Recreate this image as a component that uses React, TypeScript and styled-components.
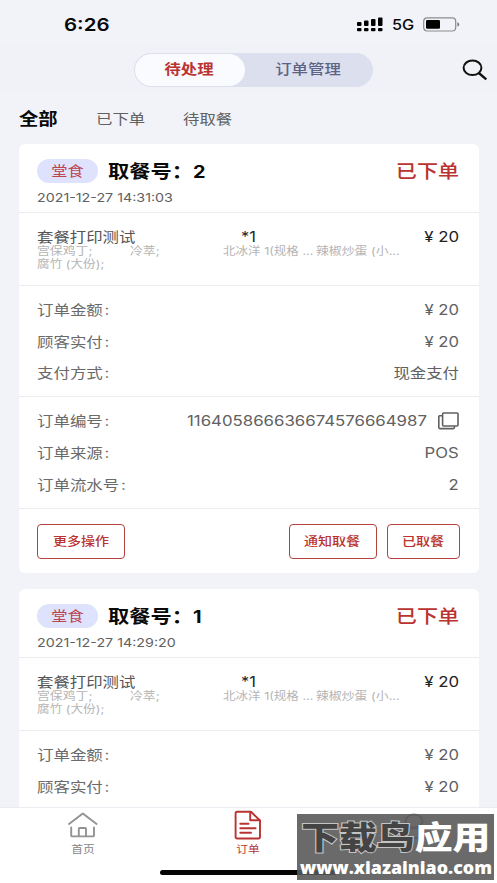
import React from "react";
import styled, { createGlobalStyle } from "styled-components";

const GlobalStyle = createGlobalStyle`
  * { box-sizing: border-box; }
  body { margin: 0; background: #f2f3f8; }
`;

type Align = "left" | "center" | "right";

const Txt = styled.span<{ $size: number; $x?: number; $color?: string; $weight?: number; $align?: Align; $dy?: number }>`
  display: inline-block;
  white-space: pre;
  font-size: ${(p) => p.$size}px;
  font-weight: ${(p) => p.$weight ?? 400};
  color: ${(p) => p.$color ?? "#616161"};
  line-height: 20px;
  transform: translateY(${(p) => p.$dy ?? 0}px) scaleX(${(p) => p.$x ?? 1.17});
  transform-origin: ${(p) => p.$align ?? "left"} center;
`;

const Colon = styled.span`
  margin-left: 1.5px;
`;

const Screen = styled.div`
  position: relative;
  width: 497px;
  height: 883px;
  overflow: hidden;
  display: flex;
  flex-direction: column;
  background: #f2f3f8;
  font-family: Inter, "Noto Sans CJK SC", sans-serif;
`;

const StatusBar = styled.header`
  flex: none;
  height: 46px;
  padding: 3px 37px 0 64px;
  display: flex;
  align-items: center;
  justify-content: space-between;
`;

const StatusIcons = styled.div`
  display: flex;
  align-items: center;
`;

const NetworkLabel = styled.div`
  width: 24px;
  margin: 0 7px 0 8px;
`;

const NavBar = styled.nav`
  flex: none;
  height: 47px;
  padding: 0 9px 0 134px;
  display: flex;
  align-items: center;
  justify-content: space-between;
  background: #f1f2f7;
`;

const Segmented = styled.div`
  width: 239px;
  height: 34px;
  display: flex;
  border-radius: 17px;
  background: #dcdfed;
  border: 1px solid #dcdfed;
`;

const Segment = styled.div<{ $active?: boolean }>`
  width: ${(p) => (p.$active ? 110 : 127)}px;
  height: 32px;
  padding-right: 2px;
  display: flex;
  align-items: center;
  justify-content: center;
  border-radius: 16px;
  background: ${(p) => (p.$active ? "#fafbff" : "transparent")};
`;

const FilterTabs = styled.div`
  flex: none;
  height: 51px;
  padding-left: 19px;
  display: grid;
  grid-template-columns: 77px 87px 80px;
  align-items: center;
`;

const List = styled.main`
  flex: 1;
  min-height: 0;
  overflow: hidden;
  display: flex;
  flex-direction: column;
  gap: 16px;
  padding: 0 18.5px;
`;

const Card = styled.article`
  flex: none;
  height: 429px;
  border-radius: 6px;
  background: #fff;
`;

const Section = styled.section<{ $h: number; $top: number }>`
  height: ${(p) => p.$h}px;
  padding: ${(p) => p.$top}px 19.5px 0 18.5px;
  border-bottom: 1.5px solid #ebecf2;
`;

const CardTitle = styled.div`
  height: 28px;
  display: flex;
  align-items: center;
`;

const Badge = styled.div`
  width: 61px;
  height: 24px;
  margin-right: 10px;
  display: flex;
  align-items: center;
  justify-content: center;
  border-radius: 12px;
  background: #dfe2fd;
`;

const PickupNumber = styled.div`
  flex: 1;
  display: grid;
  grid-template-columns: 85px 30px;
`;

const ItemRow = styled.div`
  height: 18px;
  display: grid;
  grid-template-columns: 204px 1fr auto;
`;

const ComboGrid = styled.div`
  display: grid;
  grid-template-columns: 93px 93px 93px 93px;
  grid-auto-rows: 13px;
  align-items: center;
`;

const Row = styled.div`
  height: 31.7px;
  display: flex;
  align-items: center;
  justify-content: space-between;
`;

const CopyValue = styled.div`
  display: flex;
  align-items: center;
  gap: 11px;
`;

const Actions = styled.footer`
  display: flex;
  gap: 10px;
  padding: 15px 19px 0 18.5px;
`;

const Button = styled.button<{ $w: number; $push?: boolean }>`
  width: ${(p) => p.$w}px;
  height: 35px;
  padding: 0;
  margin-right: ${(p) => (p.$push ? "auto" : "0")};
  display: flex;
  align-items: center;
  justify-content: center;
  border: 1.4px solid #b4423f;
  border-radius: 4px;
  background: #fff;
  font-family: inherit;
`;

const BottomNav = styled.nav`
  flex: none;
  height: 76px;
  border-top: 1px solid #ebecf1;
  background: #fff;
  display: flex;
  flex-direction: column;
  align-items: center;
  justify-content: space-between;
  padding-bottom: 8px;
`;

const NavItems = styled.div`
  width: 100%;
  display: grid;
  grid-template-columns: repeat(3, 1fr);
`;

const NavItem = styled.div`
  display: flex;
  flex-direction: column;
  align-items: center;
  padding-top: 2px;
`;

const HomeIndicator = styled.div`
  width: 177px;
  height: 5px;
  border-radius: 3px;
  background: #050505;
`;

const Watermark = styled.aside`
  position: absolute;
  left: 297px;
  top: 814px;
  width: 197px;
  height: 66px;
  background: rgba(88, 88, 88, 0.89);
  display: flex;
  flex-direction: column;
  align-items: center;
`;

const WatermarkName = styled.div`
  height: 42px;
  font-size: 31.5px;
  line-height: 48px;
  font-weight: 900;
  white-space: nowrap;
  color: #fff;
  transform: scaleX(1.2);
`;

const Outlined = styled.span`
  color: #444;
  -webkit-text-stroke: 2px #c4c4c4;
  paint-order: stroke fill;
`;

const WatermarkUrl = styled.div`
  font: 800 18px/22px "Open Sans", sans-serif;
  color: #fff;
  transform: scaleX(0.99);
`;

const RED = "#b93430";

const Signal = () => (
  <svg width="27" height="15" viewBox="0 0 27 15">
    {[4, 5.4, 7, 8.6].map((h, i) => (
      <g key={i}>
        <rect x={i * 7} y={9 - h} width="4.5" height={h} rx="1" />
        <rect x={i * 7} y="11" width="4.5" height="3.3" rx="1" />
      </g>
    ))}
  </svg>
);

const Battery = () => (
  <svg width="37" height="15" viewBox="0 0 37 15">
    <rect x=".7" y=".8" width="32" height="13.2" rx="3.5" fill="none" stroke="#8b8c90" strokeWidth="1.2" />
    <rect x="3" y="3" width="14" height="8.8" rx="1.3" />
    <path d="M34.4 5.3q1.8.3 1.8 2.1t-1.8 2.1z" fill="#77787c" />
  </svg>
);

const SearchIcon = () => (
  <svg width="26" height="22" viewBox="0 0 26 22" fill="none" stroke="#111" strokeWidth="2">
    <ellipse cx="10.5" cy="8.8" rx="8.9" ry="7.3" />
    <path d="M16.8 14 24.3 20.3" strokeWidth="2.4" />
  </svg>
);

const CopyIcon = () => (
  <svg width="21" height="18" viewBox="0 0 21 18" fill="none" stroke="#606060" strokeWidth="1.6">
    <rect x="4.6" y="1" width="15.4" height="13" rx="1" />
    <path d="M4.6 3.8H1.5Q.8 3.8.8 4.6V15.6Q.8 16.6 1.8 16.6H15.5Q16.4 16.6 16.4 15.6V14" />
  </svg>
);

const HomeIcon = () => (
  <svg width="32" height="30" viewBox="0 0 32 30" fill="none" stroke="#929292" strokeWidth="1.9" strokeLinecap="round" strokeLinejoin="round">
    <path d="M2 14 15.8 3.6 29.6 14" />
    <path d="M4.2 17.4V25.4Q4.2 26.4 5.2 26.4H11.8V18.8Q11.8 18 12.6 18H18.2Q19 18 19 18.8V26.4H26Q27 26.4 27 25.4V17.4M11.8 26.4H19" />
  </svg>
);

const OrderIcon = () => (
  <svg width="28" height="30" viewBox="0 0 28 30" fill="none" stroke={RED} strokeWidth="1.9" strokeLinecap="round" strokeLinejoin="round">
    <path d="M3 1.8H17L26 10.5V27Q26 28.5 24.4 28.5H3.2Q1.6 28.5 1.6 27V3.3Q1.6 1.8 3 1.8Z" />
    <path d="M16.2 2V10.3H25.6M6.3 13.7H14.5M6.3 18.2H21.6M6.3 22.8H17" />
  </svg>
);

const ProfileIcon = () => (
  <svg width="28" height="30" viewBox="0 0 28 30" fill="none" stroke="#929292" strokeWidth="1.9">
    <ellipse cx="14" cy="11" rx="8.5" ry="6.5" />
    <path d="M2 28Q3 18 14 18T26 28Z" />
  </svg>
);

const Detail = ({ label, children }: { label: string; children: React.ReactNode }) => (
  <Row>
    <Txt $size={14} $x={1.175} $color="#6a6a6a">{label}<Colon>:</Colon></Txt>
    {children}
  </Row>
);

const Value = ({ children, x = 1.19 }: { children: React.ReactNode; x?: number }) => (
  <Txt $size={14} $x={x} $align="right">{children}</Txt>
);

const OrderCard = ({ num, time }: { num: string; time: string }) => (
  <Card>
    <Section $h={69} $top={13}>
      <CardTitle>
        <Badge><Txt $size={13.5} $x={1.2} $align="center" $color="#bc4350">堂食</Txt></Badge>
        <PickupNumber>
          <Txt $size={18} $x={1.18} $weight={700} $color="#090909" $dy={0.7}>取餐号：</Txt>
          <Txt $size={17} $x={1.17} $weight={700} $color="#090909" $dy={0.7}>{num}</Txt>
        </PickupNumber>
        <Txt $size={18} $x={1.17} $weight={500} $align="right" $color={RED} $dy={0.7}>已下单</Txt>
      </CardTitle>
      <Txt $size={12} $x={1.19} $dy={1}>{time}</Txt>
    </Section>
    <Section $h={73} $top={13.5}>
      <ItemRow>
        <Txt $size={14} $color="#555">套餐打印测试</Txt>
        <Txt $size={14} $color="#222">*1</Txt>
        <Txt $size={14} $x={1.2} $align="right" $color="#222">¥ 20</Txt>
      </ItemRow>
      <ComboGrid>
        <Txt $size={11} $color="#b5b5b5">宫保鸡丁;</Txt>
        <Txt $size={11} $color="#b5b5b5">冷萃;</Txt>
        <Txt $size={11} $x={1.14} $color="#b5b5b5">北冰洋 1(规格 ...</Txt>
        <Txt $size={11} $color="#b5b5b5">辣椒炒蛋 (小...</Txt>
        <Txt $size={11} $x={1.15} $color="#b5b5b5">腐竹 (大份);</Txt>
      </ComboGrid>
    </Section>
    <Section $h={111} $top={8}>
      <Detail label="订单金额"><Value>¥ 20</Value></Detail>
      <Detail label="顾客实付"><Value>¥ 20</Value></Detail>
      <Detail label="支付方式"><Value x={1.17}>现金支付</Value></Detail>
    </Section>
    <Section $h={112} $top={8.3}>
      <Detail label="订单编号">
        <CopyValue><Value x={1.2}>116405866636674576664987</Value><CopyIcon /></CopyValue>
      </Detail>
      <Detail label="订单来源"><Value>POS</Value></Detail>
      <Detail label="订单流水号"><Value>2</Value></Detail>
    </Section>
    <Actions>
      <Button $w={88} $push><Txt $size={12} $weight={500} $align="center" $color={RED}>更多操作</Txt></Button>
      <Button $w={88}><Txt $size={12} $weight={500} $align="center" $color={RED}>通知取餐</Txt></Button>
      <Button $w={73}><Txt $size={12} $weight={500} $align="center" $color={RED}>已取餐</Txt></Button>
    </Actions>
  </Card>
);

export default function App() {
  return (
    <Screen>
      <GlobalStyle />
      <StatusBar>
        <Txt $size={17.5} $x={1.17} $weight={600} $color="#090909">6:26</Txt>
        <StatusIcons>
          <Signal />
          <NetworkLabel><Txt $size={14.5} $x={1.12} $weight={500} $color="#090909">5G</Txt></NetworkLabel>
          <Battery />
        </StatusIcons>
      </StatusBar>
      <NavBar>
        <Segmented>
          <Segment $active><Txt $size={14} $weight={700} $align="center" $color={RED} $dy={-0.7}>待处理</Txt></Segment>
          <Segment><Txt $size={14} $weight={500} $align="center" $color="#5d6384" $dy={-0.7}>订单管理</Txt></Segment>
        </Segmented>
        <SearchIcon />
      </NavBar>
      <FilterTabs>
        <Txt $size={16.5} $x={1.17} $weight={700} $color="#090909">全部</Txt>
        <Txt $size={14}>已下单</Txt>
        <Txt $size={14}>待取餐</Txt>
      </FilterTabs>
      <List>
        <OrderCard num="2" time="2021-12-27 14:31:03" />
        <OrderCard num="1" time="2021-12-27 14:29:20" />
      </List>
      <BottomNav>
        <NavItems>
          <NavItem><HomeIcon /><Txt $size={10} $align="center" $color="#858585" $dy={-1.5}>首页</Txt></NavItem>
          <NavItem><OrderIcon /><Txt $size={10} $align="center" $color={RED} $dy={-1.5}>订单</Txt></NavItem>
          <NavItem><ProfileIcon /></NavItem>
        </NavItems>
        <HomeIndicator />
      </BottomNav>
      <Watermark>
        <WatermarkName><Outlined>下载鸟</Outlined>应用</WatermarkName>
        <WatermarkUrl>www.xiazainiao.com</WatermarkUrl>
      </Watermark>
    </Screen>
  );
}
